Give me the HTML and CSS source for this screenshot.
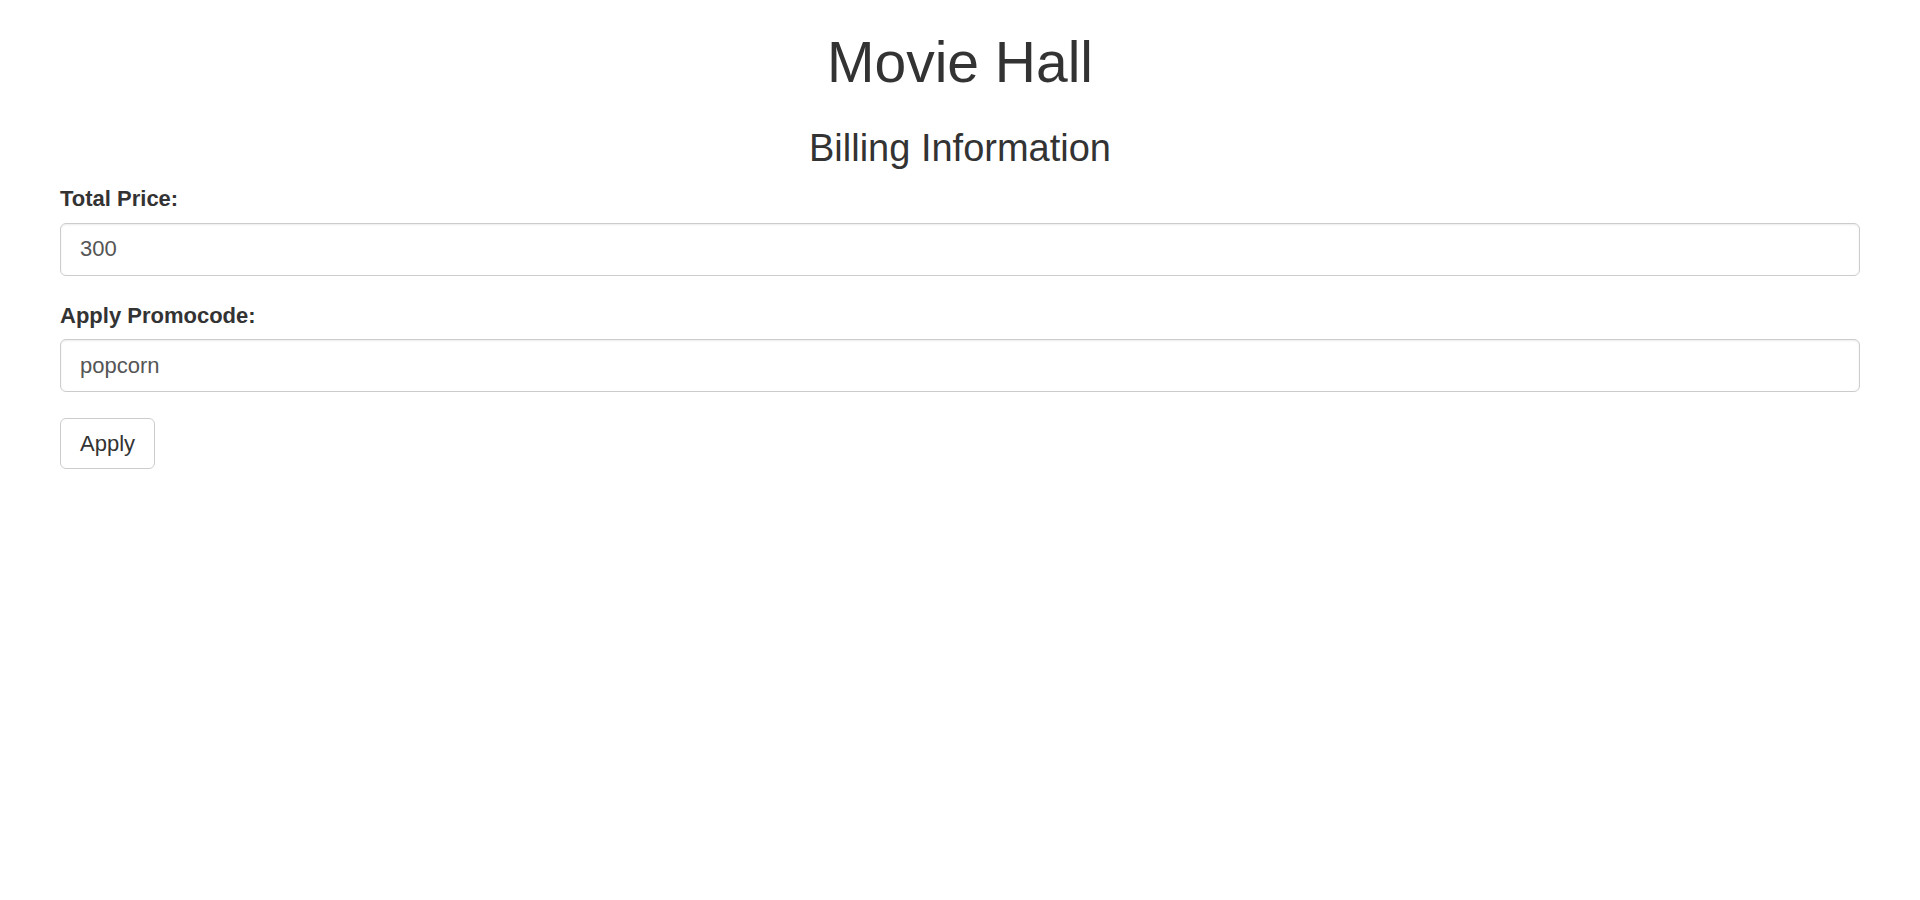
FILE: index.html
```html
<!DOCTYPE html>
<html lang="en">
<head>
<meta charset="utf-8">
<title>Movie Hall</title>
<link rel="stylesheet" href="styles.css">
</head>
<body>
<div class="page">
  <h1 class="title">Movie Hall</h1>
  <h3 class="subtitle">Billing Information</h3>
  <form class="billing">
    <div class="form-group">
      <label class="field-label" for="price">Total Price:</label>
      <input class="form-control" id="price" type="text" value="300" readonly>
    </div>
    <div class="form-group">
      <label class="field-label" for="promo">Apply Promocode:</label>
      <input class="form-control" id="promo" type="text" value="popcorn">
    </div>
    <button class="btn" type="button">Apply</button>
  </form>
</div>
</body>
</html>
```

FILE: styles.css
```css
* {
  box-sizing: border-box;
}

html, body {
  margin: 0;
  padding: 0;
  background: #fff;
}

body {
  font-family: "Liberation Sans", Arial, Helvetica, sans-serif;
  font-size: 22px;
  line-height: 1.42857;
  color: #333;
}

.page {
  padding: 0 60px;
}

.title {
  margin: 31px 0 16px;
  font-size: 57px;
  font-weight: 500;
  line-height: 1.1;
  text-align: center;
}

.subtitle {
  margin: 34px 0 14px;
  font-size: 38px;
  font-weight: 500;
  line-height: 1.1;
  text-align: center;
}

.form-group {
  margin-bottom: 24px;
}

.field-label {
  display: inline-block;
  margin-bottom: 8px;
  font-weight: bold;
}

.form-control {
  display: block;
  width: 100%;
  height: 53px;
  padding: 9px 19px;
  font-family: inherit;
  font-size: 22px;
  line-height: 1.42857;
  color: #555;
  background: #fff;
  border: 1px solid #ccc;
  border-radius: 6px;
  box-shadow: inset 0 1px 2px rgba(0, 0, 0, 0.075);
  outline: none;
}

.btn {
  display: inline-block;
  height: 51px;
  margin-top: 2px;
  padding: 0 19px;
  font-family: inherit;
  font-size: 22px;
  line-height: 1;
  color: #333;
  background: #fff;
  border: 1px solid #ccc;
  border-radius: 6px;
  cursor: pointer;
}
```
